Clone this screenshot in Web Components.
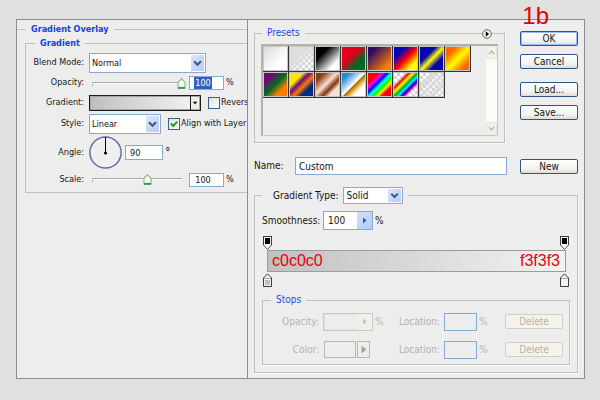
<!DOCTYPE html>
<html lang="en">
<head>
<meta charset="utf-8">
<title>Gradient Overlay</title>
<style>
html, body { margin: 0; min-height: 100%; background: #e0e0e0; }
body { font: 10px/12px "DejaVu Sans Condensed", "DejaVu Sans", sans-serif; color: #151515; }
</style>
</head>
<body>
<gradient-editor></gradient-editor>
<script>
const base = `
*{box-sizing:border-box}
:host{display:flex;align-items:center;white-space:nowrap;min-width:0}
:host([hidden]){display:none}
input,select,button{font:inherit;color:inherit;margin:0;border-radius:0;min-width:0}
.label{width:var(--label-width,auto);flex:none;text-align:right;padding-bottom:var(--label-lift,0px);margin-right:var(--label-gap,4px)}
.unit{margin-left:2px;flex:none;padding-bottom:var(--label-lift,0px)}
.box{border:1px solid #8ba9cf;background:#fff;padding:0 0 0 3px;height:18px}
:host([disabled]){color:#b5b3a8}
`;
function define(name, css, markup) {
  customElements.define(name, class extends HTMLElement {
    constructor() {
      super();
      this.attachShadow({ mode: "open" });
    }
    connectedCallback() {
      const a = (key, fallback = "") => this.getAttribute(key) ?? fallback;
      const dis = this.hasAttribute("disabled") ? "disabled" : "";
      this.shadowRoot.innerHTML = `<style>${base}${css}</style>${markup(a, dis, this)}`;
    }
  });
}

define("ps-group", `
:host{display:block}
fieldset{margin:0;min-width:0;border:1px solid #c3c2b5;padding:var(--group-padding,0);box-shadow:1px 1px 0 #f8f8f8}
:host([open]) fieldset{border-right:0;box-shadow:none}
:host([line]) fieldset{border-width:1px 0 0;box-shadow:none}
legend{padding:var(--legend-padding,0 5px);margin-left:var(--legend-indent,8px);color:#1c4fd6;display:flex}
:host([strong]) legend{color:#0646dd;font-weight:bold}
`, () => `<fieldset><legend><slot name="legend"></slot></legend><slot></slot></fieldset>`);

define("ps-select", `
.wrap{display:grid;width:var(--control-width,70px);height:var(--control-height,20px);border:1px solid #8ba9cf;background:#fff}
select{grid-area:1/1;appearance:none;border:0;background:none;padding:0 0 0 var(--inset,3px);width:100%;height:100%;outline:0}
svg{grid-area:1/1;justify-self:end;align-self:stretch;width:13px;height:auto;background:linear-gradient(135deg,#dde7fe,#b4c9f7);margin:1px;pointer-events:none}
`, a => `<label class="label" for="c">${a("label")}</label><div class="wrap"><select id="c"><option>${a("value")}</option></select>
<svg viewBox="0 0 13 14"><path d="M3 5.2 6.5 8.7 10 5.2" fill="none" stroke="#43597f" stroke-width="2.2"/></svg></div>`);

define("ps-number", `
.wrap{display:flex;width:var(--control-width,50px);height:var(--control-height,18px);border:1px solid #8ba9cf;background:#fff}
input{flex:1;width:0;border:0;background:none;padding:0 0 0 4px;height:100%;outline:0}
button{width:15px;flex:none;border:0;padding:0;background:linear-gradient(135deg,#d3e0fe,#b4c9f7);display:grid;place-items:center}
:host([disabled]) .wrap{background:none}
:host([disabled][spin]) .wrap{border-color:#c9c8ba;box-shadow:inset 0 0 0 1px #e3e2d9}
:host([disabled]) button{background:#f1f0e8}
svg{width:5px;height:7px}
`, (a, dis, el) => `<label class="label" for="c">${a("label")}</label><div class="wrap"><input id="c" value="${a("value")}" ${dis}>${el.hasAttribute("spin") ? `<button ${dis} aria-label="Adjust ${a("label")}"><svg viewBox="0 0 5 7"><path d="M1 .5 4.5 3.5 1 6.5z" fill="${dis ? "#c2c1b4" : "#3c5a92"}"/></svg></button>` : ""}</div><span class="unit">${a("unit")}</span>`);

const thumb = `url("data:image/svg+xml,%3Csvg xmlns='http://www.w3.org/2000/svg' viewBox='0 0 9 11'%3E%3Cpath d='M1 10.5V4L4.5.8 8 4v6.5z' fill='%23f7f7f3' stroke='%238fa394'/%3E%3Cpath d='M1 3.9 4.5.8 8 3.9' fill='none' stroke='%2368b66a'/%3E%3Cpath d='M1 9.8h7' stroke='%2327a83a' stroke-width='1.8'/%3E%3C/svg%3E")`;
define("ps-slider", `
input[type=range]{appearance:none;background:none;width:94px;height:11px;margin:0 3px 0 3px;outline:0;flex:none}
input[type=range]::-webkit-slider-runnable-track{height:11px;background:linear-gradient(#aaa89d,#aaa89d) 0 4px/90px 1px no-repeat,linear-gradient(#fff,#fff) 0 5px/90px 1px no-repeat,linear-gradient(#aaa89d,#aaa89d) 0 5px/1px 3px no-repeat}
input[type=range]::-webkit-slider-thumb{appearance:none;width:9px;height:11px;background:${thumb}}
.pick{width:35px;height:14px;display:flex;align-items:center;flex:none;border:1px solid #8ba9cf;background:#fff;padding-left:4px}
.pick input{width:18px;height:12px;border:0;padding:0;background:none;line-height:12px;text-align:center;outline:0}
:host([picked]) .pick input{background:#2f62c4;color:#fff}
`, a => `<label class="label" for="c">${a("label")}</label><input type="range" aria-label="${a("label")} slider" min="0" max="100" value="${a("position")}"><div class="pick"><input id="c" value="${a("value")}"></div><span class="unit">%</span>`);

define("ps-check", `
input{appearance:none;width:12px;height:12px;border:1px solid #3d6189;background:linear-gradient(135deg,#dfdfda,#fff);flex:none;grid-area:1/1}
.tick{display:grid;margin-right:1px}
svg{grid-area:1/1;width:12px;height:12px;pointer-events:none;display:none}
input:checked + svg{display:block}
label{padding-bottom:var(--label-lift,0px)}
`, (a, d, el) => `<span class="tick"><input id="c" type="checkbox" ${el.hasAttribute("on") ? "checked" : ""}><svg viewBox="0 0 12 12"><path d="M3 5.5 5.2 8 9.3 3.6" fill="none" stroke="#1fa027" stroke-width="2"/></svg></span><label for="c">${a("label")}</label>`);

define("ps-button", `
:host{display:block}
button{display:block;width:100%;height:15px;line-height:13px;border:1px solid #2f5584;border-radius:2px;padding:0;background:linear-gradient(#fff,#f2f2ef 70%,#dcdbd5);text-align:center}
:host([primary]) button{box-shadow:inset 0 0 0 1px #9cbcf2;border-color:#2b529a}
:host([disabled]) button{border-color:#d2d0c4;background:#f4f2e9;color:#b5b3a8}
`, (a, dis) => `<button ${dis}><slot></slot></button>`);

define("ps-gradient", `
button{display:flex;width:112px;height:16px;border:1px solid #1d1d16;padding:0;background:#eee;box-shadow:inset 0 0 0 1px #a5a498;flex:none}
.fill{flex:1;margin:1px 0 1px 1px;align-self:stretch;background:linear-gradient(90deg,#c0c0c0,#f0f0f0)}
svg{width:10px;height:14px;border-left:1px solid #1d1d16}
`, a => `<label class="label" for="c">${a("label")}</label><button id="c"><span class="fill"></span><svg viewBox="0 0 10 14"><path d="M2 5.5h5L4.5 8.5z" fill="#000"/></svg></button>`);

define("ps-dial", `
svg{width:33px;height:33px;flex:none;margin-right:3px}
.box{width:38px;height:15px;padding-left:4px;outline:0}
.unit{font-size:12px}
`, a => `<label class="label" for="c">${a("label")}</label><svg viewBox="0 0 33 33" aria-hidden="true"><circle cx="16.5" cy="16.5" r="15.6" fill="#efefee" stroke="#5b71a8" stroke-width="1.5"/><path d="M16.5 1v16" stroke="#000"/><circle cx="16.5" cy="17" r="1.6"/></svg><input class="box" id="c" value="${a("value")}"><span class="unit">°</span>`);

define("ps-swatches", `
:host{display:flex;align-items:stretch;height:92px;border:1px solid #b5b4a8;border-width:2px 1px 1px 2px;border-color:#b3b2a5 #c9c8bc #c9c8bc #b3b2a5}
.list{flex:1;display:flex;flex-wrap:wrap;align-content:flex-start;min-width:0}
.list button{width:26px;height:26px;border:solid #33333b;border-width:0 1px 1px 0;padding:0;background:none}
.list i{display:block;width:100%;height:100%;border:1px solid #c6c6c6}
.bar{width:11px;background:#fbfbf8;display:flex;flex-direction:column;justify-content:space-between;flex:none}
.bar button{border:1px solid #e6e6df;border-radius:2px;width:11px;height:13px;padding:0;background:#f1f0e9;display:grid;place-items:center}
.bar svg{width:7px;height:5px}
`, () => {
  const check = "repeating-conic-gradient(#d3d3d3 0 25%,#fff 0 50%) 0 0/6px 6px";
  const g = s => `linear-gradient(135deg,${s})`;
  const fills = [
    g("#dcdcdc,#fff 70%"), g("#ddd 35%,#ddd0 85%") + "," + check, g("#000 28%,#fff 78%"),
    g("#e3001b 40%,#006a24 70%"), g("#2a0b62 18%,#ff7c00 85%"), g("#0606b6 25%,#f00 52%,#ff0 80%"),
    g("#0505ae 34%,#ff0 52%,#0505ae 72%"), g("#ff6a00 22%,#ff0 52%,#ff6a00 82%"),
    g("#6f0872 20%,#006b20 50%,#ff7c00 76%"), g("#ffe600 28%,#6b0b80 42%,#ff7a00 58%,#002a80 74%"),
    g("#8b3c18 18%,#ffdccb 46%,#7a3618 64%,#f7e0d4 78%"), g("#2387d8 15%,#fff 50%,#a56c00 53%,#e5a92b 62%,#fff 75%"),
    g("#f00 22%,#f0f 32%,#00f 42%,#0ff 52%,#0f0 62%,#ff0 70%,#f00 80%"),
    g("#fff0 26%,#f00 32%,#ff0 42%,#0a2 51%,#0ef 59%,#00d 66%,#e0a 73%,#fff0 77%") + "," + check,
    g("#ddd0 20%,#d8d8d8 32%,#ddd0 42%,#d8d8d8 52%,#ddd0 64%,#d8d8d8 76%,#ddd0 86%") + "," + check
  ];
  return `<div class="list">${fills.map((f, n) => `<button aria-label="Preset ${n + 1}"><i style="background:${f}"></i></button>`).join("")}</div>
<div class="bar"><button aria-label="Scroll up"><svg viewBox="0 0 7 5"><path d="M.8 4 3.5 1.2 6.2 4" fill="none" stroke="#c0bfb4" stroke-width="1.6"/></svg></button><button aria-label="Scroll down"><svg viewBox="0 0 7 5"><path d="M.8 1 3.5 3.8 6.2 1" fill="none" stroke="#c0bfb4" stroke-width="1.6"/></svg></button></div>`;
});

define("ps-stop", `
:host{display:block}
button{display:block;width:9px;height:14px;border:0;padding:0;background:none}
svg{display:block;width:9px;height:14px}
`, a => a("side") === "top"
  ? `<button aria-label="Opacity stop"><svg viewBox="0 0 9 14"><path d="M.5.5h8V9L4.5 13.5.5 9z" fill="#f4f4f0" stroke="#55554e"/><path d="M0 .5h9M.5 0v9M8.5 0v9" stroke="#3b3b36"/><rect x="2" y="2" width="5" height="6"/></svg></button>`
  : `<button aria-label="Color stop"><svg viewBox="0 0 9 14"><path d="M.5 13.5V5L4.5.8 8.5 5v8.5z" fill="#f4f4f4" stroke="#3b3b36"/><path d="M1 5.5h7" stroke="#a9a9a2"/><rect x="2" y="7" width="5" height="5" fill="${a("color")}"/></svg></button>`);

define("ps-ramp", `
:host{display:block}
.stops{display:flex;justify-content:space-between}
.ramp{margin:0 3px 0 4px;height:22px;border:1px solid #9c9c9c;background:linear-gradient(90deg,#c0c0c0,#f3f3f3);display:flex;justify-content:space-between;align-items:center;padding:0 5px 0 4px;font:16px/20px "Liberation Sans",Arial,sans-serif;color:#e8000d}
.low{padding-top:1px}
`, () => `<div class="stops"><ps-stop side="top"></ps-stop><ps-stop side="top"></ps-stop></div>
<div class="ramp"><span>c0c0c0</span><span>f3f3f3</span></div>
<div class="stops low"><ps-stop color="#c0c0c0"></ps-stop><ps-stop color="#f3f3f3"></ps-stop></div>`);

define("ps-color", `
.label{line-height:12px}
.chip{width:32px;height:17px;border:1px solid #bab9aa;background:none;padding:0;margin:0 1px}
.more{width:13px;height:17px;border:1px solid #bab9aa;background:none;padding:0;display:grid;place-items:center}
svg{width:6px;height:9px}
`, (a, dis) => `<label class="label" for="c">${a("label")}</label><button class="chip" id="c" ${dis}></button><button class="more" aria-label="Color options" ${dis}><svg viewBox="0 0 6 9"><path d="M.5.5 5.5 4.5.5 8.5z" fill="#a5a497"/></svg></button>`);

define("overlay-panel", `
:host{display:block;overflow:hidden;--label-lift:2px;--label-gap:5px;font-size:9px}
.outer{--legend-indent:9px;margin:3px 0 0}
.inner{--legend-indent:9px;--group-padding:4px 0 2px;--label-width:58px;margin:2px 0 0 8px}
.row{display:flex;align-items:center;height:20px}
.row > *{flex:none}
.row.tall{height:33px;margin-top:1px}
.row.mid{height:22px}
.blend{--control-width:117px;--inset:2px}
.style{--control-width:72px;--inset:2px}
ps-check{margin-left:7px}
.last{height:21px}
`, () => `<ps-group line strong class="outer"><span slot="legend">Gradient Overlay</span>
<ps-group open strong class="inner"><span slot="legend">Gradient</span>
<div class="row"><ps-select class="blend" label="Blend Mode:" value="Normal"></ps-select></div>
<div class="row"><ps-slider picked label="Opacity:" position="100" value="100"></ps-slider></div>
<div class="row"><ps-gradient label="Gradient:"></ps-gradient><ps-check label="Revers"></ps-check></div>
<div class="row mid"><ps-select class="style" label="Style:" value="Linear"></ps-select><ps-check on label="Align with Layer"></ps-check></div>
<div class="row tall"><ps-dial label="Angle:" value="90"></ps-dial></div>
<div class="row last"><ps-slider label="Scale:" position="60" value="100"></ps-slider></div>
</ps-group></ps-group>`);

define("editor-panel", `
:host{display:block;padding:7px 6px 5px;border-left:1px solid #8d8d8d}
.top{display:flex;gap:15px}
.presets{flex:1;min-width:0;position:relative;--group-padding:5px 6px 6px;--legend-indent:1px}
.menu{position:absolute;right:13px;top:2px;width:10px;height:10px;padding:0;border:0;background:none}
.menu svg{display:block;width:10px;height:10px}
.actions{width:58px;padding-top:4px;display:flex;flex-direction:column;gap:8px}
.gap{margin-top:5px}
.name{display:flex;align-items:center;gap:13px;margin-top:14px}
.name div{flex:1;display:flex;align-items:center}
.name label{width:41px}
.name .box{flex:1;outline:0}
.name ps-button{width:58px}
.type{margin-top:12px;--group-padding:7px 7px 7px 7px;--legend-indent:0px;--legend-padding:0 5px 0 11px}
.type > ps-select{--control-width:60px;--control-height:17px;--label-gap:4px;color:#151515}
.smooth{--label-width:57px;--control-height:19px}
ps-ramp{margin:6px 1px 0 1px}
.stops{display:block;margin-top:7px;--group-padding:6px 6px 5px 0;--legend-indent:8px;--legend-padding:0 5px}
.grid{display:grid;grid-template-columns:124px 1fr 58px;column-gap:4px;row-gap:9px;align-items:center;--label-width:56px}
.grid > *{min-height:19px}
.grid ps-button{min-height:15px}
.loc{justify-self:end;width:106px;--label-width:45px;--control-width:33px}
`, () => `<div class="top">
<ps-group class="presets"><span slot="legend">Presets</span><ps-swatches></ps-swatches><button class="menu" slot="legend" aria-label="Presets menu"><svg viewBox="0 0 10 10"><circle cx="5" cy="5" r="4.3" fill="#f2f2f2" stroke="#666"/><path d="M3.8 2.3 7 5 3.8 7.7z"/></svg></button></ps-group>
<div class="actions"><ps-button primary>OK</ps-button><ps-button>Cancel</ps-button><ps-button class="gap">Load...</ps-button><ps-button>Save...</ps-button></div></div>
<div class="name"><div><label for="n">Name:</label><input class="box" id="n" value="Custom"></div><ps-button>New</ps-button></div>
<ps-group class="type"><ps-select slot="legend" label="Gradient Type:" value="Solid"></ps-select>
<ps-number class="smooth" spin label="Smoothness:" value="100" unit="%"></ps-number>
<ps-ramp></ps-ramp>
<ps-group class="stops"><span slot="legend">Stops</span><div class="grid">
<ps-number spin disabled label="Opacity:" unit="%"></ps-number><ps-number class="loc" disabled label="Location:" unit="%"></ps-number><ps-button disabled>Delete</ps-button>
<ps-color disabled label="Color:"></ps-color><ps-number class="loc" disabled label="Location:" unit="%"></ps-number><ps-button disabled>Delete</ps-button>
</div></ps-group></ps-group>`);

define("gradient-editor", `
:host{display:block;padding:19px 15px 21px 16px;position:relative}
main{display:grid;grid-template-columns:230px 1fr;border:1px solid #8d8d8d;background:#ededed}
.tag{position:absolute;right:51px;top:2px;font:24px/28px "Liberation Sans",Arial,sans-serif;color:#e00000}
`, () => `<main><overlay-panel></overlay-panel><editor-panel></editor-panel></main><span class="tag">1b</span>`);
</script>
</body>
</html>
